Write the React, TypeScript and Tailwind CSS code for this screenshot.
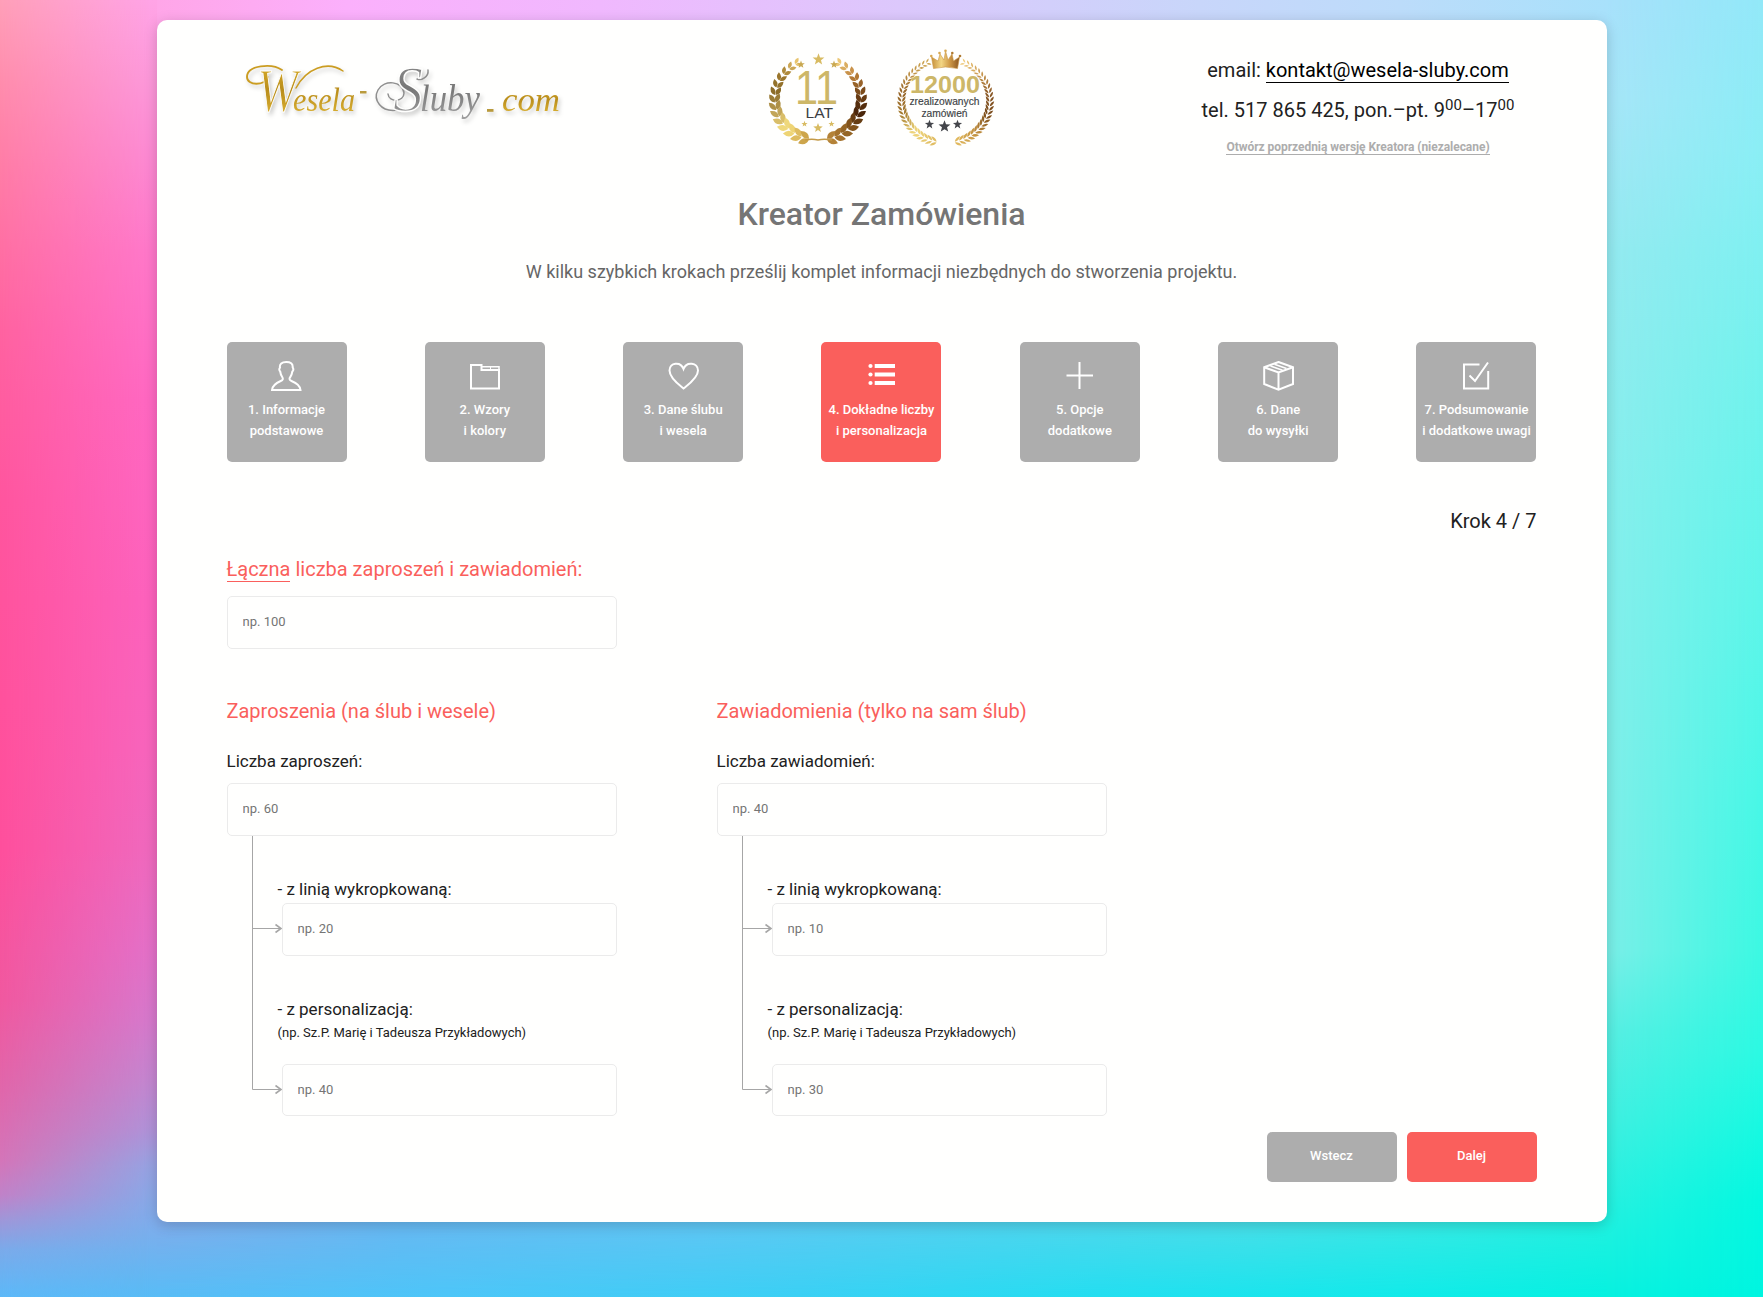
import React from "react";

type Leaf = { x: number; y: number; r: number; s: number; c: string };

const mix = (a: number[], b: number[], t: number) =>
  `rgb(${a.map((v, i) => Math.round(v + (b[i] - v) * t)).join(",")})`;

const ramp = (stops: number[][], t: number) => {
  const p = t * (stops.length - 1);
  const i = Math.min(stops.length - 2, Math.floor(p));
  return mix(stops[i], stops[i + 1], p - i);
};

const LEFT = [[232, 196, 110], [158, 120, 44], [138, 108, 42], [190, 160, 84], [248, 226, 130], [205, 165, 75]];
const RIGHT = [[236, 200, 120], [190, 130, 60], [120, 72, 24], [70, 34, 8], [140, 92, 32], [180, 130, 55]];
const LEFT2 = [[205, 165, 80], [190, 145, 70], [150, 100, 40], [165, 125, 50], [240, 215, 125], [225, 190, 100]];
const RIGHT2 = [[240, 205, 130], [200, 150, 75], [140, 90, 40], [120, 74, 26], [190, 140, 60], [225, 185, 95]];

/* Two mirrored branches of paired leaves, from the top of a ring to its foot. */
function branch(cx: number, cy: number, rx: number, ry: number, n: number, s0: number, s1: number, start: number, spread: number, left: number[][], right: number[][]) {
  const leaves: Leaf[] = [];
  for (const side of [-1, 1]) {
    for (let i = 0; i < n; i++) {
      const t = i / (n - 1);
      const rad = ((start + (168 - start) * t) * Math.PI) / 180;
      const tangent = (Math.atan2(-Math.sin(rad) * ry, -side * Math.cos(rad) * rx) * 180) / Math.PI;
      const s = s0 + (s1 - s0) * Math.min(1, t * 1.3);
      const c = ramp(side < 0 ? left : right, t);
      for (const k of [-1, 1]) {
        leaves.push({
          x: cx + side * Math.sin(rad) * (rx + k * 0.4),
          y: cy - Math.cos(rad) * (ry + k * 0.4),
          r: tangent + side * k * spread,
          s,
          c,
        });
      }
    }
  }
  return leaves;
}

function Leaves({ items, thin }: { items: Leaf[]; thin?: boolean }) {
  const w = thin ? 0.34 : 0.5;
  return (
    <>
      {items.map((l, i) => (
        <path
          key={i}
          fill={l.c}
          d={`M0 0Q${l.s * 0.45} ${-l.s * w} ${l.s} 0Q${l.s * 0.45} ${l.s * w} 0 0Z`}
          transform={`translate(${l.x.toFixed(1)} ${l.y.toFixed(1)}) rotate(${l.r.toFixed(1)})`}
        />
      ))}
    </>
  );
}

function Star({ x, y, r, fill }: { x: number; y: number; r: number; fill: string }) {
  const pts = Array.from({ length: 10 }, (_, i) => {
    const a = (i * Math.PI) / 5;
    const q = i % 2 ? r * 0.42 : r;
    return `${(x + Math.sin(a) * q).toFixed(2)},${(y - Math.cos(a) * q).toFixed(2)}`;
  }).join(" ");
  return <polygon points={pts} fill={fill} />;
}

const ring1 = branch(63, 59, 43, 41, 14, 7, 11.5, 32, 30, LEFT, RIGHT);
const ring2 = branch(190.7, 61, 44, 42, 25, 5, 7.5, 26, 34, LEFT2, RIGHT2);

function Badges() {
  return (
    <svg width="253" height="115" viewBox="0 0 253 115" className="shrink-0" fontFamily="Liberation Sans, Arial, sans-serif">
      <defs>
        <linearGradient id="crown" x1="0" x2="1">
          <stop offset="0" stopColor="#c58f3a" />
          <stop offset=".35" stopColor="#f3d684" />
          <stop offset=".65" stopColor="#d09a48" />
          <stop offset="1" stopColor="#8a5520" />
        </linearGradient>
      </defs>
      <Leaves items={ring1} />
      <path d="M50 100Q57 98.500 63 100Q69 98.500 77 100" fill="none" stroke="#c49a48" strokeWidth="1.600" />
      <Star x={63.5} y={19.5} r={6.2} fill="#d8bb62" />
      <Star x={46} y={24.5} r={4} fill="#c9a850" />
      <Star x={79} y={24.5} r={4} fill="#c9a850" />
      <text x="40" y="63.500" fontSize="48" fill="#cdb768" textLength="43" lengthAdjust="spacingAndGlyphs">11</text>
      <text x="50.500" y="78" fontSize="14.800" fill="#3c3f44" textLength="27.500" lengthAdjust="spacingAndGlyphs">LAT</text>
      <Star x={49.5} y={84} r={3.2} fill="#d8bb62" />
      <Star x={63} y={88} r={5} fill="#d8bb62" />
      <Star x={76.5} y={84} r={3.2} fill="#d8bb62" />

      <Leaves items={ring2} thin />
      <path d="M178.500 28.500L176.500 17L183 21L185 14L189 20L190.500 11L193 20L197 14L198.500 21L204.500 17L202.500 28.500Q190.500 25.500 178.500 28.500Z" fill="url(#crown)" stroke="#c99544" strokeWidth=".6" />
      <circle cx="176.300" cy="16" r="1.300" fill="#d8a850" />
      <circle cx="184.500" cy="13" r="1.300" fill="#d8a850" />
      <circle cx="190.500" cy="10.800" r="1.300" fill="#d8a850" />
      <circle cx="197.300" cy="13" r="1.300" fill="#b07a30" />
      <circle cx="205" cy="16" r="1.300" fill="#b07a30" />
      <text x="155" y="52.500" fontSize="24.500" fontWeight="700" fill="#cdb768" textLength="70" lengthAdjust="spacingAndGlyphs">12000</text>
      <text x="154.500" y="64.500" fontSize="10.300" fill="#3c3f44" stroke="#3c3f44" strokeWidth=".15" textLength="70" lengthAdjust="spacingAndGlyphs">zrealizowanych</text>
      <text x="166.500" y="76.500" fontSize="10.300" fill="#3c3f44" stroke="#3c3f44" strokeWidth=".15" textLength="46" lengthAdjust="spacingAndGlyphs">zamówień</text>
      <Star x={174.5} y={84.5} r={4.8} fill="#44464b" />
      <Star x={189.5} y={86.5} r={6.3} fill="#44464b" />
      <Star x={202.5} y={84.5} r={4.8} fill="#44464b" />
    </svg>
  );
}

function Logo() {
  return (
    <svg
      width="350"
      height="90"
      viewBox="0 0 350 90"
      className="drop-shadow-[2px_3px_2px_rgba(0,0,0,0.2)]"
      fontFamily="Liberation Serif, Times New Roman, serif"
      fontStyle="italic"
    >
      <defs>
        <linearGradient id="gold" x1="0" x2="0" y1="0" y2="1">
          <stop offset="0" stopColor="#e2b62c" />
          <stop offset=".5" stopColor="#b98d1c" />
          <stop offset="1" stopColor="#e6bd3a" />
        </linearGradient>
        <linearGradient id="silver" x1="0" x2="0" y1="0" y2="1">
          <stop offset="0" stopColor="#8f8f8f" />
          <stop offset=".5" stopColor="#777" />
          <stop offset="1" stopColor="#a8a8a8" />
        </linearGradient>
      </defs>
      <g fill="none" stroke="#cb9d22" strokeLinecap="round">
        <path d="M38 27C35 36 17 36 17 27C17 15 42 13 52 20" strokeWidth="1.900" />
        <path d="M66 38C76 19 97 10 113 21" strokeWidth="1.500" />
      </g>
      <text y="61" fill="url(#gold)">
        <tspan x="27" fontSize="62" stroke="#fffffe" strokeWidth="1" textLength="41" lengthAdjust="spacingAndGlyphs">W</tspan>
        <tspan x="63" fontSize="34" textLength="62" lengthAdjust="spacingAndGlyphs">esela</tspan>
      </text>
      <rect x="130" y="41" width="6.500" height="2.500" fill="#b99a3c" />
      <g fill="none" stroke="#8f8f8f" strokeWidth="1.500" strokeLinecap="round">
        <path d="M168 60C150 63 143 49 148 40C154 29 173 31 174 43C174 52 159 53 158 44" />
        <path d="M187 29C191 31 199 27 198 20" />
      </g>
      <text y="61" fill="url(#silver)">
        <tspan x="163" fontSize="65" stroke="#fffffe" strokeWidth="1.500" textLength="30" lengthAdjust="spacingAndGlyphs">S</tspan>
        <tspan x="190" fontSize="37" textLength="60" lengthAdjust="spacingAndGlyphs">luby</tspan>
      </text>
      <rect x="257" y="59" width="6.500" height="2.800" fill="#b99a3c" />
      <text x="272" y="61" fontSize="34" fill="url(#gold)" textLength="58" lengthAdjust="spacingAndGlyphs">com</text>
    </svg>
  );
}

const icons: Record<string, React.ReactNode> = {
  person: (
    <path d="M1 29H29.500C29 24 25 21.800 20.500 20C18 19 18.200 17.300 19.300 16C20.800 14.200 21 12.500 21.300 10.500C22.700 9.300 22.300 7.500 21.700 6.500C22 2.500 19.500 1 15.300 1C10.800 1 8.300 3 9 6.700C8 7.500 8 9.500 9.200 10.500C9.500 12.700 9.800 14.200 11.200 16C12.200 17.500 12.200 19 9.700 20C5.500 21.800 1.500 24 1 29Z" />
  ),
  folder: (
    <>
      <path d="M2 4H12.500V9H30V27.500H2Z" />
      <path d="M12.500 5.800H30V9" strokeWidth="1.500" />
      <path d="M21.500 5.500V9" strokeWidth="1" />
    </>
  ),
  heart: <path d="M15.500 27.500C11 23.800 1.500 17 1.500 9.500C1.500 1.500 12.500 0 15.500 8C18.500 0 30 1.500 30 9.500C30 17 20 23.800 15.500 27.500Z" />,
  list: (
    <g fill="#fff" stroke="none">
      <circle cx="4.500" cy="5" r="2.100" />
      <circle cx="4.500" cy="13.500" r="2.100" />
      <circle cx="4.500" cy="22" r="2.100" />
      <path d="M8.700 3H29V7H8.700ZM8.700 11.500H29V15.500H8.700ZM8.700 20H29V24H8.700Z" />
    </g>
  ),
  plus: <path d="M15.500 1V28M2.500 14.500H29" />,
  box: (
    <>
      <path d="M15.500 1L30 6.200V23L15.500 28.700L1.200 23V6.200ZM1.200 6.200L15.500 11.500L30 6.200M15.500 11.500V28.700" />
      <path d="M7.500 5L19.500 9.300M11.500 3.300L23.500 7.600" strokeWidth="1.600" />
    </>
  ),
  check: <path d="M18.500 3.500H3V27.500H27.200V10M8.500 14.500L14 20L27 1.500" />,
};

const steps = [
  ["person", "1. Informacje", "podstawowe"],
  ["folder", "2. Wzory", "i kolory"],
  ["heart", "3. Dane ślubu", "i wesela"],
  ["list", "4. Dokładne liczby", "i personalizacja"],
  ["plus", "5. Opcje", "dodatkowe"],
  ["box", "6. Dane", "do wysyłki"],
  ["check", "7. Podsumowanie", "i dodatkowe uwagi"],
];

function Field({ hint, className = "" }: { hint: string; className?: string }) {
  return (
    <input
      placeholder={hint}
      className={`block rounded-[5px] border border-[#ebebeb] bg-transparent px-[15px] pb-[2px] text-[13px] placeholder:text-[#757575] outline-none ${className}`}
    />
  );
}

function Group({ title, label, hints }: { title: string; label: string; hints: string[] }) {
  return (
    <section className="w-[390px]">
      <h2 className="text-xl leading-[30px] text-[#fa5f5c]">{title}</h2>
      <p className="mt-[22px] text-[17px] leading-[26px]">{label}</p>
      <Field hint={hints[0]} className="mt-[9px] h-[53px] w-full" />
      <div className="flex">
        <svg width="55" height="280" fill="none" stroke="#a6a6a6" className="shrink-0">
          <path d="M25.500 0V253.500H54M25.500 92.500H54" />
          <path d="M48.500 88.500L54 92.500L48.500 96.500M48.500 249.500L54 253.500L48.500 257.500" strokeWidth="1.600" />
        </svg>
        <div className="w-[335px]">
          <p className="-ml-1 mt-10 text-[17px] leading-[26px]">- z linią wykropkowaną:</p>
          <Field hint={hints[1]} className="mt-px h-[53px] w-full" />
          <p className="-ml-1 mt-10 text-[17px] leading-[26px]">- z personalizacją:</p>
          <p className="-ml-1 text-[13px] leading-[21px]">(np. Sz.P. Marię i Tadeusza Przykładowych)</p>
          <Field hint={hints[2]} className="mt-[21px] h-[52px] w-full" />
        </div>
      </div>
    </section>
  );
}

function Backdrop() {
  return (
    <div className="absolute inset-0 -z-10">
      <div className="absolute inset-0 bg-[linear-gradient(180deg,#ffa4e6_0px,#fd98da_80px,#fd88d2_165px,#ff78ca_250px,#ff68c2_400px,#fd62bd_600px,#f865bd_750px,#f069be_850px,#e470c8_950px,#d679cc_1020px,#c486d0_1080px,#b092d8_1130px,#98a2e2_1165px,#80aceb_1220px,#58bcf6_1297px)]" />
      <div className="absolute inset-y-0 left-0 w-[150px] bg-[linear-gradient(180deg,#ff9fb8_0px,#ff8cac_83px,#ff7ca6_165px,#ff62a0_330px,#ff559e_500px,#ff519c_700px,#fe4f9c_850px,#f0589f_1000px,#e066aa_1090px,#d474b8_1160px,#c082c8_1195px,#9f96d8_1220px,#7aaaea_1250px,#5cb8f8_1297px)] [mask-image:linear-gradient(90deg,#000,transparent)]" />
      <div className="absolute inset-y-0 right-0 w-[160px] bg-[linear-gradient(180deg,#a8e1fb_0px,#a6e6f8_100px,#94eaf0_250px,#86efed_500px,#7eefe9_800px,#7aefe8_950px,#58efe3_1030px,#40f0e1_1120px,#20f1e0_1220px,#08f1e0_1297px)]" />
      <div className="absolute inset-y-0 right-0 w-[156px] bg-[linear-gradient(180deg,#92e8f8_0px,#8aeef5_150px,#74f2ed_350px,#5ef5e9_600px,#48f7e6_800px,#3cf8e2_950px,#2cf9e2_1050px,#04f8e0_1200px,#00f5e0_1297px)] [mask-image:linear-gradient(270deg,#000,transparent)]" />
      <div className="absolute left-[157px] right-[156px] top-0 h-10 bg-[linear-gradient(90deg,#ffa6e8,#fbb0fc_190px,#f0b8fe_443px,#dcc8fc_743px,#c8d6fa_1043px,#bcdcfa_1243px,#a8e1fb)]" />
      <div className="absolute bottom-0 left-[157px] right-[156px] h-[80px] bg-[linear-gradient(90deg,#80aceb,#68b8f2_243px,#60c6f4_543px,#50d4ef_843px,#48dfe9_1093px,#34eae4_1293px,#20f1e0)]" />
      <div className="absolute bottom-0 left-[157px] right-[156px] h-[76px] bg-[linear-gradient(90deg,#58bcf6,#4cc6f8_293px,#3ad0f4_643px,#24def0_943px,#12eae9_1243px,#06f1e0)] [mask-image:linear-gradient(0deg,#000,transparent)]" />
    </div>
  );
}

export default function App() {
  return (
    <div className="relative isolate flex h-[1297px] w-[1763px] justify-center overflow-hidden pt-5 font-[Roboto,sans-serif] text-[#212121]">
      <Backdrop />
      <main className="h-[1202px] w-[1450px] rounded-[10px] bg-[#fffffe] px-[70px] pt-5 shadow-[0_3px_14px_rgba(0,0,0,0.18)]">
        <header className="flex h-[124px] justify-between">
          <div className="w-[357px] pl-[3px] pt-[10px]">
            <Logo />
          </div>
          <Badges />
          <div className="w-[357px] pt-[10px] text-center text-xl leading-10">
            <p>
              email: <a className="border-b border-black text-black">kontakt@wesela-sluby.com</a>
            </p>
            <p className="whitespace-nowrap">
              tel. 517 865 425, pon.–pt. 9<sup className="text-[15px]">00</sup>–17<sup className="text-[15px]">00</sup>
            </p>
            <p className="text-xs font-bold leading-[34px] tracking-[-0.04px] text-[#adadad]">
              <a className="border-b border-[#adadad]">Otwórz poprzednią wersję Kreatora (niezalecane)</a>
            </p>
          </div>
        </header>

        <h1 className="mt-[30px] text-center text-[32px] font-medium leading-10 text-[#757575]">Kreator Zamówienia</h1>
        <p className="mt-6 text-center text-lg leading-7 text-[#666]">
          W kilku szybkich krokach prześlij komplet informacji niezbędnych do stworzenia projektu.
        </p>

        <nav className="mt-14 flex justify-between">
          {steps.map(([icon, a, b]) => (
            <div
              key={a}
              className={`flex size-[120px] flex-col items-center rounded-[5px] pt-[19px] text-[13px] font-medium leading-[21px] text-white ${icon === "list" ? "bg-[#fa5f5c]" : "bg-[#adadad]"}`}
            >
              <svg width="31" height="30" viewBox="0 0 31 30" fill="none" stroke="#fff" strokeWidth="2" className="mb-2 shrink-0">
                {icons[icon]}
              </svg>
              <span className="whitespace-nowrap">{a}</span>
              <span className="whitespace-nowrap">{b}</span>
            </div>
          ))}
        </nav>

        <p className="mt-11 text-right text-xl leading-[30px]">Krok 4 / 7</p>

        <h2 className="mt-[18px] text-xl leading-[30px] text-[#fa5f5c]">
          <span className="border-b border-[#fa5f5c]">Łączna</span> liczba zaproszeń i zawiadomień:
        </h2>
        <Field hint="np. 100" className="mt-3 h-[53px] w-[390px]" />

        <div className="mt-[47px] flex gap-[100px]">
          <Group title="Zaproszenia (na ślub i wesele)" label="Liczba zaproszeń:" hints={["np. 60", "np. 20", "np. 40"]} />
          <Group title="Zawiadomienia (tylko na sam ślub)" label="Liczba zawiadomień:" hints={["np. 40", "np. 10", "np. 30"]} />
        </div>

        <div className="mt-4 flex justify-end gap-[10px] text-[13px] font-medium text-white">
          <button className="h-[50px] w-[130px] rounded-[5px] bg-[#adadad] pb-[3px]">Wstecz</button>
          <button className="h-[50px] w-[130px] rounded-[5px] bg-[#fa5f5c] pb-[3px]">Dalej</button>
        </div>
      </main>
    </div>
  );
}
